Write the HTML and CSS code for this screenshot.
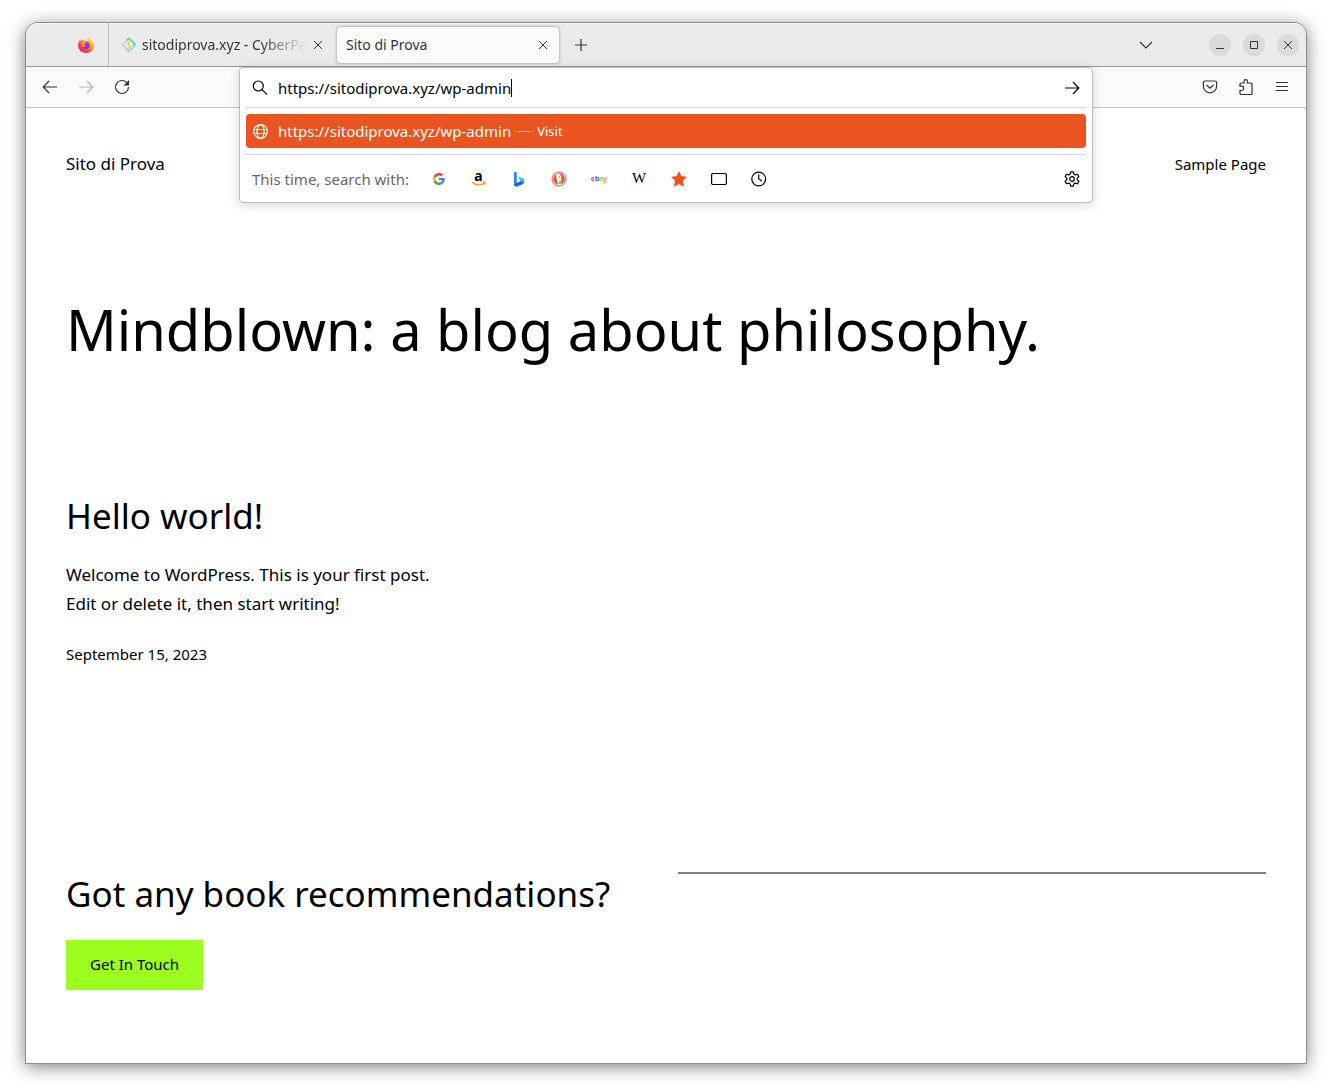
FILE: index.html
```html
<!DOCTYPE html>
<html lang="en">
<head>
<meta charset="utf-8">
<meta name="viewport" content="width=device-width, initial-scale=1">
<title>Sito di Prova</title>
<link rel="stylesheet" href="styles.css">
</head>
<body>
<div class="window">
  <div class="tabbar">
    <button class="view-button" aria-label="Firefox View">
      <svg width="16" height="16" viewBox="0 0 16 16">
        <defs>
          <linearGradient id="fox" x1="0.85" y1="0.1" x2="0.15" y2="0.95"><stop offset="0" stop-color="#fff044"/><stop offset="0.35" stop-color="#ffa02f"/><stop offset="0.65" stop-color="#ff4a3e"/><stop offset="1" stop-color="#e31587"/></linearGradient>
          <linearGradient id="globe" x1="1" y1="0" x2="0" y2="1"><stop offset="0" stop-color="#b833e1"/><stop offset="1" stop-color="#5b3fd6"/></linearGradient>
        </defs>
        <path fill="url(#fox)" d="M10.6 0.3c1.1 1 1.9 2 2.2 3.1.5-.1.7-.5.7-.9C15 4 16 6.300 16 8.400 16 12.700 12.500 16 8.100 16 3.700 16 0 12.600 0 8.300 0 6 .9 4.200 2.100 3.100c0 .5.1.8.3 1.100.2-1 .8-1.900 1.600-2.500 0 .7.300 1.300.7 1.700.8-.1 1.700 0 2.300.4.9-.2 1.700-.1 2.500.3-.4-1.400 0-2.700 1.100-3.800z"/>
        <circle cx="8.200" cy="8.300" r="3.600" fill="url(#globe)"/>
        <path fill="#ff9a2c" d="M3.600 5.200c1.600-.8 3.400-.2 4.600.9-.1.800-1.100 1.100-2 1.200-.2 1.300.8 2.200 2.100 2-.8 1.200-3.700 1-4.400-1.100z"/>
      </svg>
    </button>
    <div class="tabs">
      <div class="tab">
        <svg width="16" height="16" viewBox="0 0 16 16" fill="none">
          <path d="M7.500 1.500 1.500 8l4 4" stroke="#b5dcf5" stroke-width="1.800"/>
          <path d="M5.500 3.500 8 1.500 14 7l-2 2.500" stroke="#62d8a7" stroke-width="1.800"/>
          <path d="M5.500 12 8 14.500l5.500-5.500" stroke="#7be0c0" stroke-width="1.800" stroke-dasharray="4 1"/>
          <path d="M9.500 4.500 6.500 6.500l3 3-3 2.500" stroke="#ffd02e" stroke-width="1.500"/>
        </svg>
        <span class="tab-title tab-title-fade">sitodiprova.xyz - CyberPanel</span>
        <button class="tab-close" aria-label="Close tab"><svg width="12" height="12" viewBox="0 0 12 12" class="line"><path d="m2 2 8 8M10 2l-8 8"/></svg></button>
      </div>
      <div class="tab tab-active">
        <span class="tab-title">Sito di Prova</span>
        <button class="tab-close" aria-label="Close tab"><svg width="12" height="12" viewBox="0 0 12 12" class="line"><path d="m2 2 8 8M10 2l-8 8"/></svg></button>
      </div>
      <button class="icon-button" aria-label="New tab"><svg width="16" height="16" viewBox="0 0 16 16" class="line"><path d="M8 2v12M2 8h12"/></svg></button>
    </div>
    <button class="icon-button list-tabs" aria-label="List all tabs"><svg width="16" height="16" viewBox="0 0 16 16" class="line"><path d="m2 5 6 6 6-6"/></svg></button>
    <div class="window-controls">
      <button class="round" aria-label="Minimize"><svg width="10" height="10" viewBox="0 0 10 10" class="line"><path d="M1 8.500h8"/></svg></button>
      <button class="round" aria-label="Maximize"><svg width="10" height="10" viewBox="0 0 10 10" class="line"><path d="M1.500 1.500h7v7h-7z"/></svg></button>
      <button class="round" aria-label="Close"><svg width="10" height="10" viewBox="0 0 10 10" class="line"><path d="m1 1 8 8M9 1 1 9"/></svg></button>
    </div>
  </div>

  <div class="toolbar">
    <button class="icon-button" aria-label="Back"><svg width="16" height="16" viewBox="0 0 16 16" class="line"><path d="M15 8H1.500M7 2 1.200 8 7 14"/></svg></button>
    <button class="icon-button" aria-label="Forward" disabled><svg width="16" height="16" viewBox="0 0 16 16" class="line"><path d="M1 8h13.500M9 2l5.800 6L9 14"/></svg></button>
    <button class="icon-button" aria-label="Reload"><svg width="16" height="16" viewBox="0 0 16 16" class="line"><path d="M12.800 3.600A6.500 6.500 0 1 0 14.500 8"/><path d="M15 1v5.500H9.500z" fill="currentColor" stroke="none"/></svg></button>
    <span class="spacer"></span>
    <button class="icon-button" aria-label="Save to Pocket"><svg width="16" height="16" viewBox="0 0 16 16" class="line"><path d="M3 2h10a1.600 1.600 0 0 1 1.600 1.600v3.600a6.600 6.600 0 0 1-13.200 0V3.600A1.600 1.600 0 0 1 3 2zM4.500 6 8 9.300 11.500 6"/></svg></button>
    <button class="icon-button" aria-label="Extensions"><svg width="16" height="16" viewBox="0 0 16 16" class="line"><path d="M2 7.200V5a1 1 0 0 1 1-1h3V2.300a1.700 1.700 0 0 1 3.400 0V4H13a1 1 0 0 1 1 1v9.500a1 1 0 0 1-1 1H3a1 1 0 0 1-1-1v-3h1.600a2.100 2.100 0 0 0 0-4.300z"/></svg></button>
    <button class="icon-button" aria-label="Menu"><svg width="16" height="16" viewBox="0 0 16 16" class="line"><path d="M2 3.500h12M2 7.500h12M2 11.500h12"/></svg></button>

    <div class="urlbar">
      <div class="url-row">
        <svg width="16" height="16" viewBox="0 0 16 16" class="line"><circle cx="6.300" cy="6" r="5"/><path d="m10 9.700 5 5"/></svg>
        <input class="url-input" type="text" aria-label="Address" value="https://sitodiprova.xyz/wp-admin">
        <span class="caret"></span>
        <button class="go" aria-label="Go"><svg width="16" height="16" viewBox="0 0 16 16" class="line"><path d="M1 8h13.500M9 2l5.800 6L9 14"/></svg></button>
      </div>
      <a class="result" href="#">
        <svg width="16" height="16" viewBox="0 0 16 16" class="line"><circle cx="8.500" cy="8.500" r="6.800"/><ellipse cx="8.500" cy="8.500" rx="3.600" ry="6.800"/><path d="M2.200 6.500h12.600M2.200 10.500h12.600"/></svg>
        <span class="result-url">https://sitodiprova.xyz/wp-admin</span>
        <span class="dash"></span>
        <span class="result-action">Visit</span>
      </a>
      <div class="engines">
        <span class="engines-label">This time, search with:</span>
        <button class="engine" aria-label="Google"><svg width="12" height="12" viewBox="0 0 48 48"><path fill="#ea4335" d="M24 9.500c3.540 0 6.710 1.220 9.210 3.600l6.850-6.850C35.900 2.380 30.470 0 24 0 14.620 0 6.510 5.380 2.560 13.220l7.980 6.190C12.430 13.720 17.740 9.500 24 9.500z"/><path fill="#4285f4" d="M46.980 24.550c0-1.570-.15-3.090-.38-4.550H24v9.020h12.940c-.58 2.960-2.260 5.480-4.780 7.180l7.730 6c4.510-4.180 7.090-10.360 7.090-17.650z"/><path fill="#fbbc05" d="M10.530 28.590c-.48-1.450-.76-2.990-.76-4.590s.27-3.140.76-4.590l-7.980-6.190C.92 16.460 0 20.120 0 24s.92 7.540 2.560 10.780z"/><path fill="#34a853" d="M24 48c6.480 0 11.930-2.130 15.890-5.810l-7.730-6c-2.150 1.450-4.920 2.300-8.160 2.300-6.260 0-11.570-4.220-13.470-9.910l-7.980 6.190C6.510 42.620 14.620 48 24 48z"/></svg></button>
        <button class="engine" aria-label="Amazon"><svg class="amazon" width="16" height="16" viewBox="0 0 16 16"><text x="7.500" y="9.500" text-anchor="middle" class="amazon-a">a</text><path d="M1 11.300c4 3.300 9 3.300 12.200 1M11.300 11.100c1.800-.4 2.900-.4 3 0s-.3 1.500-1 2.400" fill="none" stroke="#f90" stroke-width="1.300"/></svg></button>
        <button class="engine" aria-label="Bing"><svg width="16" height="16" viewBox="0 0 16 16"><path fill="#2a86ee" d="M3 .5 5.800 1.800v10L3 14z"/><path fill="#36c3f2" d="M7.200 5.200 12 7.600c1.500 1 1.800 2.600 1 4l-2.600-1.600-1.600-.8z"/><path fill="#1f62e6" d="m3 13 2.800-1.300 4.700-2 2.500 1.900c-.5 1-1.200 1.400-2 1.900L6 15.600c-1.400.4-2.600-.5-3-1.800z"/></svg></button>
        <button class="engine" aria-label="DuckDuckGo"><svg width="16" height="16" viewBox="0 0 16 16"><circle cx="8" cy="8" r="7" fill="#fff" stroke="#de5833"/><circle cx="8" cy="8" r="5.800" fill="#de5833"/><path fill="#fff" d="M5.300 3.200c2-.9 4.700 0 5 2.800l-.4 3 .8 4.300c-1.300.7-2.500.8-3.500.6L5.500 7.500z"/><path fill="#fc3" d="M8.500 7.500 12 8l-3 1.400z"/><path fill="#4cba3c" d="m7.500 11 4-.8-.2 2.400-3.300.2z"/><circle cx="8.500" cy="5.800" r=".6" fill="#2d4f8e"/></svg></button>
        <button class="engine ebay" aria-label="eBay"><span class="red">e</span><span class="blue">b</span><span class="yellow">a</span><span class="green">y</span></button>
        <button class="engine wiki" aria-label="Wikipedia">W</button>
        <button class="engine" aria-label="Bookmarks"><svg width="16" height="16" viewBox="0 0 16 16"><path fill="#e95420" stroke="#e95420" stroke-linejoin="round" d="m8 1 2.100 4.600 5.100.6-3.800 3.500 1 5.200L8 12.500l-4.400 2.400 1-5.200L.8 6.200l5.100-.6z"/></svg></button>
        <button class="engine" aria-label="Tabs"><svg width="16" height="16" viewBox="0 0 16 16" class="line"><rect x=".6" y="2.500" width="14.800" height="11" rx="1.200"/></svg></button>
        <button class="engine" aria-label="History"><svg width="16" height="16" viewBox="0 0 16 16" class="line"><circle cx="7.700" cy="8" r="6.900"/><path d="M7.700 3.500V8l3.300 2"/></svg></button>
        <button class="settings" aria-label="Search settings"><svg width="16" height="16" viewBox="0 0 16 16" class="line"><circle cx="8" cy="8" r="2.300"/><path stroke-linejoin="round" d="M6.700.8h2.600l.6 2.300 1.300.8 2.300-.7 1.400 2.400-1.700 1.600v1.600l1.700 1.600-1.400 2.400-2.300-.7-1.300.8-.6 2.300H6.700l-.6-2.300-1.300-.8-2.300.7-1.400-2.400 1.700-1.600V7.200L1.100 5.600l1.400-2.400 2.300.7 1.300-.8z"/></svg></button>
      </div>
    </div>
  </div>

  <div class="page">
    <header class="site-header">
      <a href="#">Sito di Prova</a>
      <nav><a class="nav-link" href="#">Sample Page</a></nav>
    </header>
    <main>
      <h1>Mindblown: a blog about philosophy.</h1>
      <article class="post">
        <h2><a href="#">Hello world!</a></h2>
        <p>Welcome to WordPress. This is your first post.<br>Edit or delete it, then start writing!</p>
        <time datetime="2023-09-15">September 15, 2023</time>
      </article>
      <section class="contact">
        <div>
          <h2>Got any book recommendations?</h2>
          <a class="cta" href="#">Get In Touch</a>
        </div>
        <hr>
      </section>
    </main>
  </div>
</div>
</body>
</html>
```
FILE: styles.css
```css
* { box-sizing: border-box; }

body {
  margin: 0;
  padding: 23px 26px 29px;
  background: #fff;
  color: #000;
  font-family: "Noto Sans", "Open Sans", sans-serif;
}

button, input { font: inherit; color: inherit; }
button { display: flex; align-items: center; justify-content: center; padding: 0; border: 0; background: none; }
a { color: inherit; text-decoration: none; }
svg { display: block; flex: none; }
.line { fill: none; stroke: currentColor; stroke-width: 1.2; }

.window {
  display: flex;
  flex-direction: column;
  min-height: calc(100vh - 52px);
  border-radius: 12px 12px 0 0;
  background: #fff;
  box-shadow: 0 0 0 1px #8e8e8e, 0 3px 18px rgba(0, 0, 0, 0.55);
}

/* Tab strip */
.tabbar {
  display: flex;
  align-items: center;
  height: 44px;
  padding-right: 7px;
  border-bottom: 1px solid #999;
  border-radius: 12px 12px 0 0;
  background: #ebebeb;
  box-shadow: inset 0 1px #f8f8f8;
  color: #333;
  font-size: 14px;
}
.view-button { width: 83px; height: 43px; padding-left: 38px; border-right: 1px solid #bbb; }
.tabs { display: flex; flex: 1; align-items: center; min-width: 0; }
.tab { display: flex; align-items: center; gap: 5px; width: 228px; height: 36px; padding: 0 13px 0 12px; }
.tab-active {
  width: 222px;
  padding: 0 10px 0 9px;
  border-radius: 4px;
  background: #fbfbfb;
  box-shadow: 0 0 3px rgba(0, 0, 0, 0.45);
}
.tab-title { flex: 1; min-width: 0; overflow: hidden; line-height: 20px; white-space: nowrap; }
.tab-title-fade { mask-image: linear-gradient(to left, transparent, #000 48px); }
.tab-close .line { stroke-width: 1; }
.icon-button { width: 36px; height: 36px; color: #333; }
.icon-button:disabled { color: #b4b4b4; }
.tabs .icon-button { margin-left: 4px; }
.list-tabs { margin-right: 45px; }
.window-controls { display: flex; gap: 12px; }
.round { width: 22px; height: 22px; border-radius: 50%; background: #dadada; }
.round .line { stroke-width: 1; }

/* Navigation bar */
.toolbar {
  position: relative;
  display: flex;
  align-items: center;
  height: 41px;
  padding: 0 6px;
  border-bottom: 1px solid #c4c4c4;
  background: #fbfbfb;
}
.spacer { flex: 1; }

/* Expanded address field, over the page */
.urlbar {
  position: absolute;
  top: 0;
  left: 213px;
  right: 213px;
  padding: 0 6px;
  border: 1px solid #bdbdbd;
  border-radius: 4px;
  background: #fff;
  box-shadow: 0 2px 12px rgba(0, 0, 0, 0.16);
  font-size: 15px;
}
.url-row { display: flex; align-items: center; height: 40px; padding: 0 6px; border-bottom: 1px solid #d6d6d6; }
.url-input { field-sizing: content; min-width: 0; margin-left: 10px; padding: 0; border: 0; outline: 0; background: none; }
.caret { width: 1px; height: 18px; background: #000; }
.go { margin-left: auto; }
.result {
  display: flex;
  align-items: center;
  height: 34px;
  margin: 6px 0;
  padding: 0 6px;
  border-radius: 4px;
  background: #e95420;
  color: #fff;
}
.result-url { margin-left: 10px; }
.dash { width: 16px; height: 1px; margin: 0 5px; background: #f6b59c; }
.result-action { font-size: 13px; }
.engines { display: flex; align-items: center; height: 48px; padding: 0 6px; border-top: 1px solid #d6d6d6; }
.engines-label { width: 167px; color: #666; white-space: nowrap; }
.engine { width: 40px; height: 32px; }
.amazon { overflow: visible; }
.amazon-a { font: bold 14px "Noto Sans", sans-serif; }
.ebay { font: bold 7px "Liberation Sans", sans-serif; }
.wiki { font: 15px "Liberation Serif", serif; }
.red { color: #e53238; }
.blue { color: #0064d2; }
.yellow { color: #f5af02; }
.green { color: #86b817; }
.settings { margin-left: auto; }

/* Site */
.page { flex: 1; padding: 41px 40px 72px; }
.site-header { display: flex; justify-content: space-between; font-size: 17px; line-height: 29px; }
.nav-link { font-size: 15px; }
h1, h2, p { margin: 0; font-weight: 400; }
h1 { margin-top: 116px; font-size: 56px; line-height: 68px; }
h2 { font-size: 35px; line-height: 44px; }
.post { margin-top: 131px; }
.post p { margin-top: 22px; font-size: 17px; line-height: 29px; }
.post time { display: block; margin-top: 24px; font-size: 15px; line-height: 24px; }
.contact { display: grid; grid-template-columns: 1fr 1fr; gap: 24px; margin-top: 206px; }
hr { width: 100%; height: 2px; margin: 0; border: 0; background: #808080; }
.cta {
  display: inline-block;
  margin-top: 24px;
  padding: 12px 24px 14px;
  background: #9dff20;
  font-size: 15px;
  line-height: 24px;
}
```
